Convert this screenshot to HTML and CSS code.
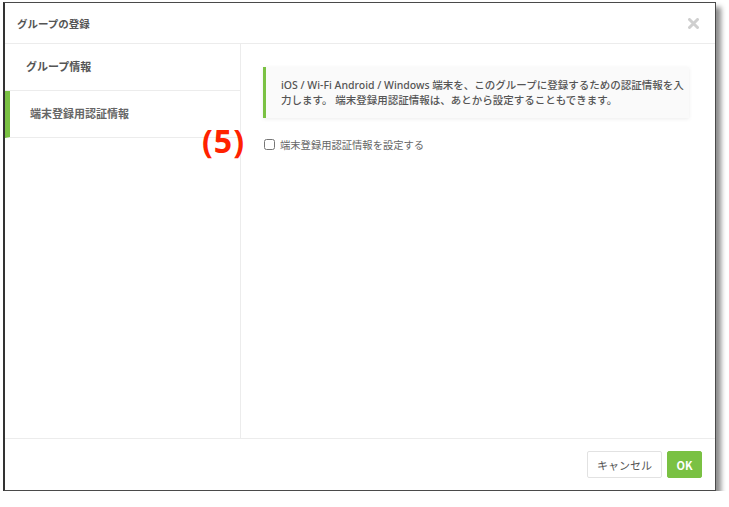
FILE: index.html
```html
<!DOCTYPE html>
<html lang="ja">
<head>
  <meta charset="UTF-8">
  <title>グループの登録</title>
  <link rel="stylesheet" href="styles.css">
</head>
<body>
  <div class="page">
    <div class="dialog">
      <div class="dialog-header">
        <span class="dialog-title">グループの登録</span>
        <svg class="close" width="11" height="11" viewBox="0 0 11 11">
          <path d="M1.5 1.5 L9.5 9.5 M9.5 1.5 L1.5 9.5" stroke="#cfcfcf" stroke-width="3" stroke-linecap="round"/>
        </svg>
      </div>
      <div class="dialog-body">
        <ul class="side-menu">
          <li>グループ情報</li>
          <li class="active">端末登録用認証情報</li>
        </ul>
        <div class="main">
          <div class="info">
            iOS / Wi-Fi Android / Windows 端末を、このグループに登録するための認証情報を入力します。 端末登録用認証情報は、あとから設定することもできます。
          </div>
          <label class="check-row">
            <input type="checkbox">
            <span>端末登録用認証情報を設定する</span>
          </label>
          <span class="marker">(5)</span>
        </div>
      </div>
      <div class="dialog-footer">
        <button class="btn">キャンセル</button>
        <button class="btn btn-ok">OK</button>
      </div>
    </div>
  </div>
</body>
</html>
```
FILE: styles.css
```css
* {
  margin: 0;
  padding: 0;
  box-sizing: border-box;
}
body {
  background: #fff;
  font-family: "Noto Sans", "Noto Sans CJK JP", sans-serif;
  color: #555;
}
.page {
  padding: 2px 0 0 3px;
}
.dialog {
  width: 713px;
  height: 489px;
  border: 1px solid #4a4a4a;
  border-left: 2px solid #333;
  background: #fff;
  box-shadow: 5px 5px 5px rgba(0, 0, 0, 0.45);
  display: flex;
  flex-direction: column;
}
.dialog-header {
  height: 41px;
  border-bottom: 1px solid #ececec;
  display: flex;
  align-items: center;
  justify-content: space-between;
  padding: 0 16px 0 12px;
}
.dialog-title {
  font-size: 10.5px;
  font-weight: bold;
  color: #555;
}
.close {
  display: block;
}
.dialog-body {
  flex: 1;
  display: flex;
  position: relative;
}
.side-menu {
  list-style-type: none;
  width: 236px;
  border-right: 1px solid #ececec;
}
.side-menu li {
  height: 47px;
  border-bottom: 1px solid #ececec;
  display: flex;
  align-items: center;
  padding: 0 0 2px 21px;
  font-size: 11px;
  font-weight: bold;
  color: #555;
}
.side-menu li.active {
  border-left: 5px solid #7ac143;
  padding-left: 20px;
  color: #666;
}
.main {
  flex: 1;
  padding: 23px 26px 0 22px;
  position: relative;
}
.info {
  background: #fafafa;
  border-left: 3px solid #7ac143;
  box-shadow: 0 1px 4px rgba(0, 0, 0, 0.08);
  padding: 11px 4px 10px 15px;
  font-size: 10.5px;
  line-height: 15px;
  font-weight: 500;
  color: #555;
}
.check-row {
  display: flex;
  align-items: center;
  margin-top: 19px;
  font-size: 10.3px;
  color: #666;
}
.check-row input {
  width: 11px;
  height: 11px;
  margin: 0 5px 0 1px;
}
.marker {
  position: absolute;
  left: -39px;
  top: 78px;
  font-family: "Open Sans", sans-serif;
  font-size: 32px;
  font-weight: bold;
  letter-spacing: 1px;
  color: #ff2200;
  line-height: 38px;
}
.dialog-footer {
  height: 52px;
  border-top: 1px solid #ececec;
  display: flex;
  justify-content: flex-end;
  align-items: center;
  gap: 5px;
  padding-right: 13px;
}
.btn {
  height: 27px;
  border: 1px solid #e2e2e2;
  border-radius: 2px;
  background: #fff;
  color: #555;
  font-family: "Noto Sans CJK JP", sans-serif;
  font-size: 11px;
  width: 75px;
  white-space: nowrap;
}
.btn-ok {
  width: 35px;
  border-color: #7ac143;
  background: #7ac143;
  color: #fff;
  font-weight: bold;
}
```
